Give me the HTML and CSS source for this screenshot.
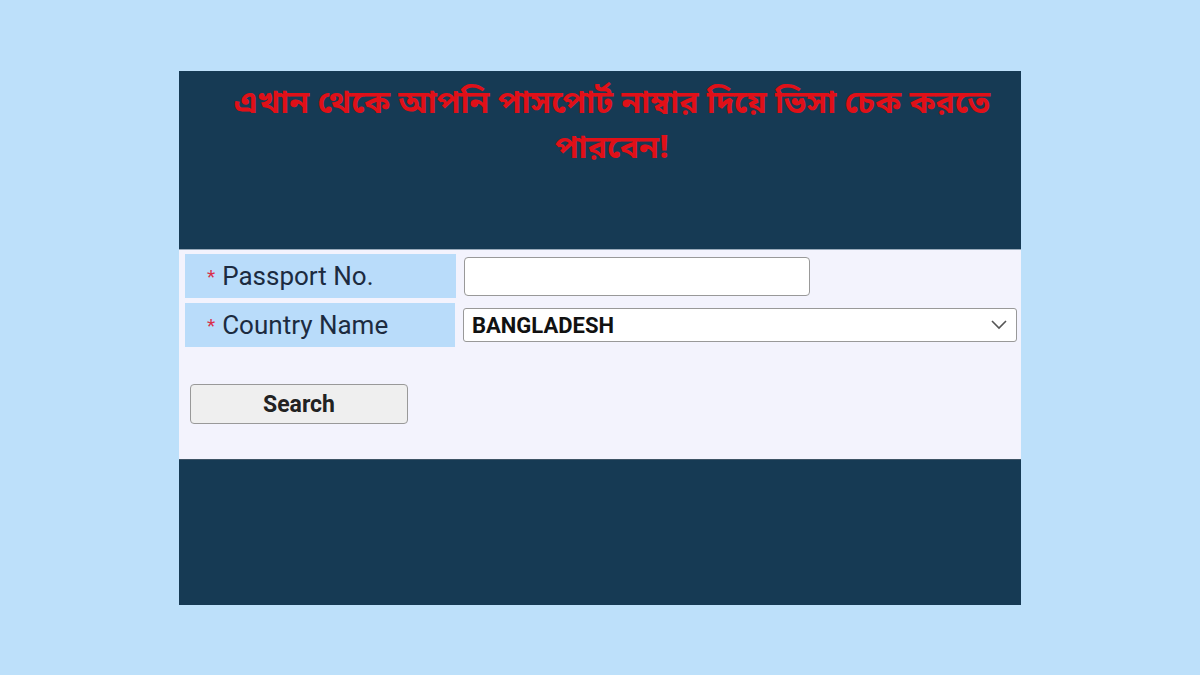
FILE: index.html
```html
<!DOCTYPE html>
<html lang="bn">
<head>
    <meta charset="UTF-8">
    <meta name="viewport" content="width=device-width, initial-scale=1.0">
    <title>Visa Check</title>
    <link rel="stylesheet" href="styles.css">
</head>
<body>

    <div class="panel">
        <div class="notice">
            <h1>এখান থেকে আপনি পাসপোর্ট নাম্বার দিয়ে ভিসা চেক করতে পারবেন!</h1>
        </div>

        <form class="visa-form" onsubmit="event.preventDefault()">
            <div class="row">
                <label class="field-label" for="passportNo"><span class="req">*</span> Passport No.</label>
                <div class="field">
                    <input type="text" id="passportNo" class="text-input">
                </div>
            </div>
            <div class="row">
                <label class="field-label" for="country"><span class="req">*</span> Country Name</label>
                <div class="field">
                    <div class="select-box">
                        <select id="country">
                            <option>BANGLADESH</option>
                        </select>
                        <svg class="chevron" width="18" height="12" viewBox="0 0 18 12">
                            <path d="M2 2 L9 9 L16 2" fill="none" stroke="#555" stroke-width="1.6"/>
                        </svg>
                    </div>
                </div>
            </div>
            <div class="actions">
                <button type="submit">Search</button>
            </div>
        </form>

        <div class="footer"></div>
    </div>

</body>
</html>
```

FILE: styles.css
```css
body {
    margin: 0;
    background-color: #bde0fa;
    font-family: Roboto, "Liberation Sans", sans-serif;
}
.panel {
    width: 842px;
    margin: 71px auto 0 179px;
    background-color: #163a54;
}
.notice {
    height: 178px;
    padding: 12px 0 0 24px;
    box-sizing: border-box;
}
.notice h1 {
    margin: 0 auto;
    width: 780px;
    text-align: center;
    color: #e01018;
    font-family: "Noto Sans Bengali", "Lohit Bengali", "FreeSans", sans-serif;
    font-size: 32px;
    font-weight: bold;
    line-height: 45px;
}
.visa-form {
    background-color: #f3f3fd;
    border-top: 1px solid #9ab;
    padding: 4px 4px 0 6px;
    height: 210px;
    box-sizing: border-box;
}
.row {
    display: flex;
    margin-bottom: 5px;
}
.field-label {
    width: 271px;
    height: 44px;
    background-color: #b9dcfa;
    color: #1c2b40;
    font-size: 26px;
    display: flex;
    align-items: center;
    padding-left: 22px;
    box-sizing: border-box;
}
.req {
    color: #d9304a;
    font-size: 19px;
    margin-right: 7px;
}
.field {
    flex: 1;
    display: flex;
    align-items: center;
    padding-left: 8px;
}
.text-input {
    width: 346px;
    height: 39px;
    box-sizing: border-box;
    border: 1px solid #999;
    border-radius: 4px;
    background: #fff;
}
.select-box {
    position: relative;
    width: 554px;
}
.select-box select {
    width: 100%;
    height: 34px;
    appearance: none;
    border: 1px solid #999;
    border-radius: 3px;
    background: #fff;
    font-family: Roboto, "Liberation Sans", sans-serif;
    font-size: 22px;
    font-weight: bold;
    color: #111;
    padding-left: 8px;
}
.chevron {
    position: absolute;
    right: 9px;
    top: 11px;
}
.actions {
    padding: 32px 0 0 5px;
}
.actions button {
    width: 218px;
    height: 40px;
    background-color: #efefef;
    border: 1px solid #999;
    border-radius: 4px;
    font-family: Roboto, "Liberation Sans", sans-serif;
    font-size: 23px;
    font-weight: bold;
    color: #222;
}
.footer {
    height: 145px;
    border-top: 1px solid #3d5466;
}
```
